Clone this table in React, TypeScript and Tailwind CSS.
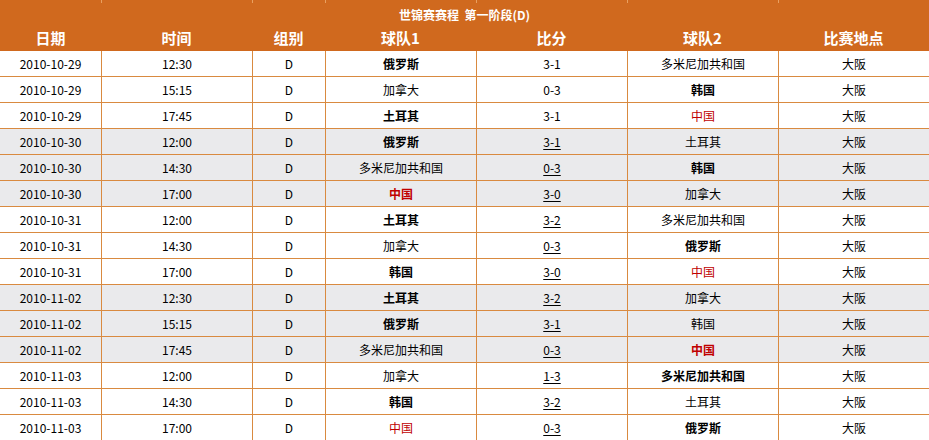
import React from "react";

type Team = { n: string; b?: boolean; r?: boolean };
type Row = { d: string; t: string; a: Team; s: string; u: boolean; h: Team; g: boolean };

const T = (n: string, b = false, r = false): Team => ({ n, b, r });

const rows: Row[] = [
  { d: "2010-10-29", t: "12:30", a: T("俄罗斯", true), s: "3-1", u: false, h: T("多米尼加共和国"), g: false },
  { d: "2010-10-29", t: "15:15", a: T("加拿大"), s: "0-3", u: false, h: T("韩国", true), g: false },
  { d: "2010-10-29", t: "17:45", a: T("土耳其", true), s: "3-1", u: false, h: T("中国", false, true), g: false },
  { d: "2010-10-30", t: "12:00", a: T("俄罗斯", true), s: "3-1", u: true, h: T("土耳其"), g: true },
  { d: "2010-10-30", t: "14:30", a: T("多米尼加共和国"), s: "0-3", u: true, h: T("韩国", true), g: true },
  { d: "2010-10-30", t: "17:00", a: T("中国", true, true), s: "3-0", u: true, h: T("加拿大"), g: true },
  { d: "2010-10-31", t: "12:00", a: T("土耳其", true), s: "3-2", u: true, h: T("多米尼加共和国"), g: false },
  { d: "2010-10-31", t: "14:30", a: T("加拿大"), s: "0-3", u: true, h: T("俄罗斯", true), g: false },
  { d: "2010-10-31", t: "17:00", a: T("韩国", true), s: "3-0", u: true, h: T("中国", false, true), g: false },
  { d: "2010-11-02", t: "12:30", a: T("土耳其", true), s: "3-2", u: true, h: T("加拿大"), g: true },
  { d: "2010-11-02", t: "15:15", a: T("俄罗斯", true), s: "3-1", u: true, h: T("韩国"), g: true },
  { d: "2010-11-02", t: "17:45", a: T("多米尼加共和国"), s: "0-3", u: true, h: T("中国", true, true), g: true },
  { d: "2010-11-03", t: "12:00", a: T("加拿大"), s: "1-3", u: true, h: T("多米尼加共和国", true), g: false },
  { d: "2010-11-03", t: "14:30", a: T("韩国", true), s: "3-2", u: true, h: T("土耳其"), g: false },
  { d: "2010-11-03", t: "17:00", a: T("中国", false, true), s: "0-3", u: true, h: T("俄罗斯", true), g: false },
];

const cols = "grid grid-cols-[101px_151px_73px_151px_151px_151px_151px]";
const cell = "flex items-center justify-center border-l border-[#d98a40] first:border-l-0";

function TeamCell({ t }: { t: Team }) {
  return (
    <div className={cell}>
      <span className={`${t.b ? "font-bold" : "font-normal"} ${t.r ? "text-[#c00000]" : "text-black"}`}>{t.n}</span>
    </div>
  );
}

export default function App() {
  const headers = ["日期", "时间", "组别", "球队1", "比分", "球队2", "比赛地点"];
  return (
    <div
      className="w-[929px] h-[440px] overflow-hidden bg-white text-[12px] leading-none text-black"
      style={{ fontFamily: '"SimSun", "Noto Sans CJK SC", sans-serif' }}
    >
      <div className={`${cols} h-[3px] bg-[#d0691e]`}>
        {headers.map((h, i) => (
          <div key={i} className="border-l border-[#e9a060] first:border-l-0" />
        ))}
      </div>
      <div className="h-[23px] bg-[#d0691e] flex items-center justify-center text-white font-bold text-[12px]">
        世锦赛赛程&nbsp;&nbsp;第一阶段(D)
      </div>
      <div className={`${cols} h-[25px] bg-[#d0691e] text-white font-bold text-[15px]`}>
        {headers.map((h) => (
          <div key={h} className="flex items-center justify-center pb-[2px]">
            {h}
          </div>
        ))}
      </div>
      {rows.map((r, i) => (
        <div key={i} className={`${cols} h-[26px] border-b border-[#d98a40] ${r.g ? "bg-[#eaeaec]" : "bg-white"}`}>
          <div className={cell}>{r.d}</div>
          <div className={cell}>{r.t}</div>
          <div className={cell}>D</div>
          <TeamCell t={r.a} />
          <div className={cell}>
            <span className={r.u ? "underline underline-offset-2" : ""}>{r.s}</span>
          </div>
          <TeamCell t={r.h} />
          <div className={cell}>大阪</div>
        </div>
      ))}
    </div>
  );
}
